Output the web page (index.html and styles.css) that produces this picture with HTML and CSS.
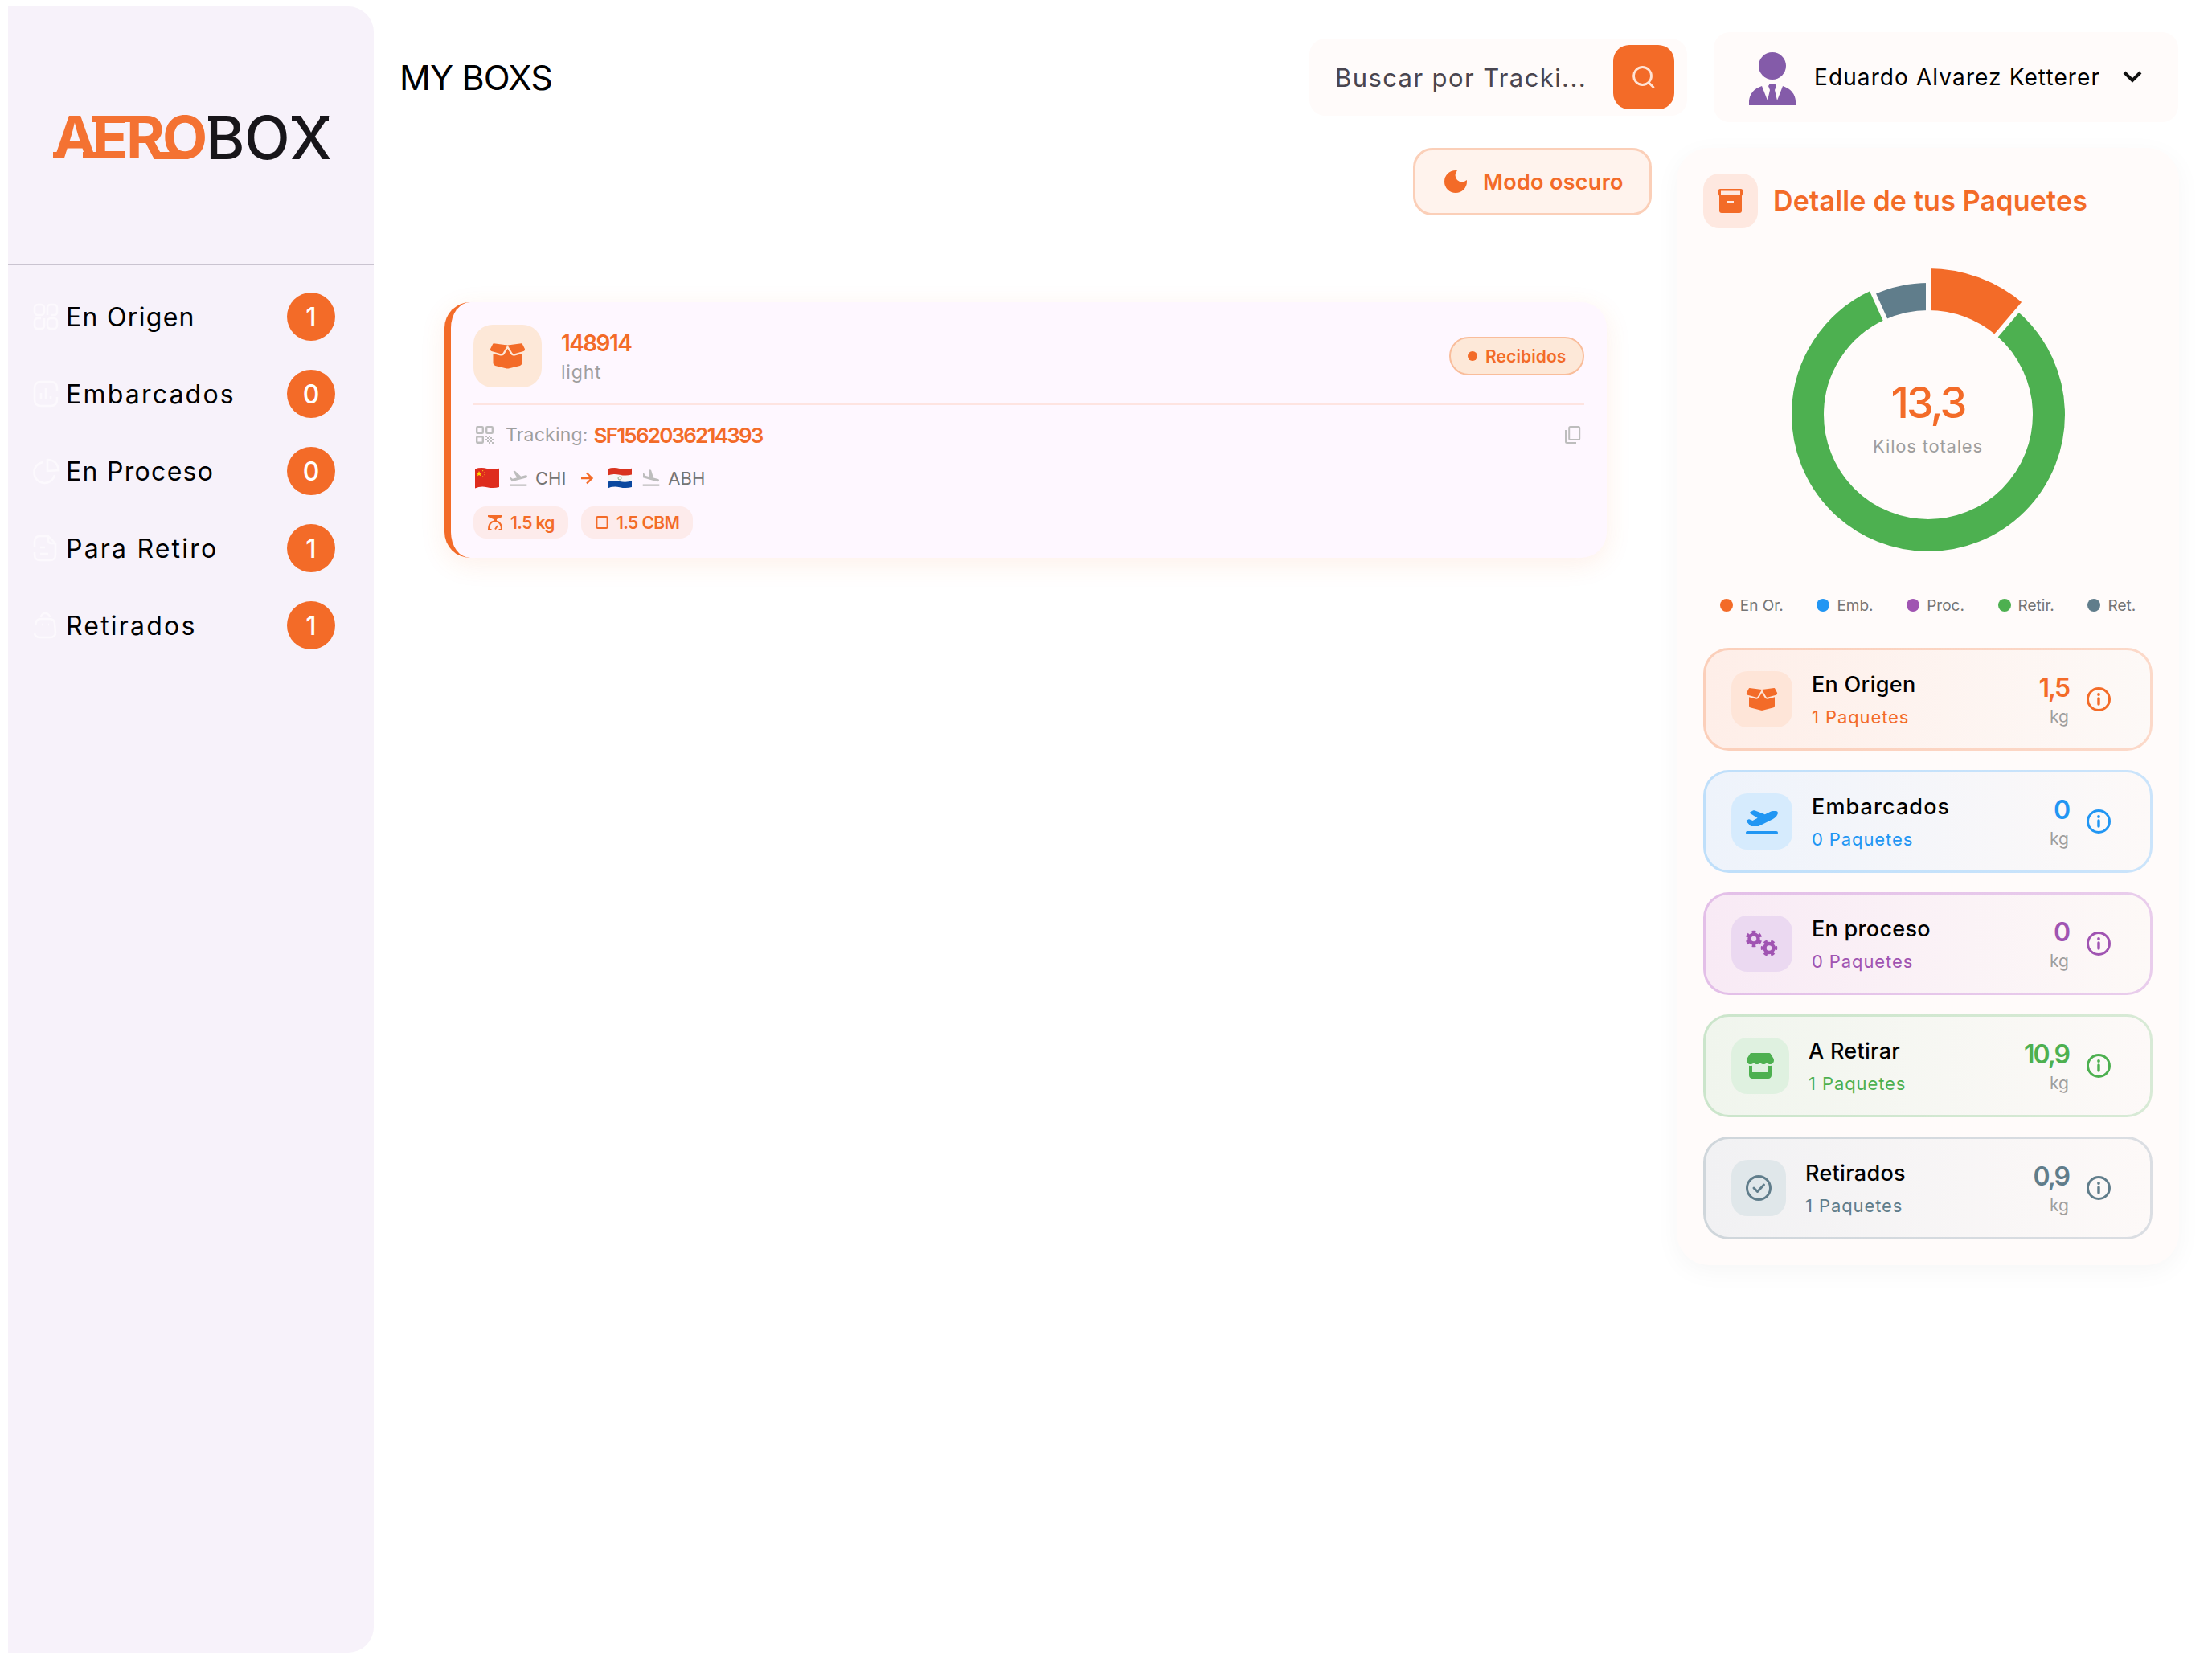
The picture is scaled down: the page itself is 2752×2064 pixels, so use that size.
FILE: index.html
```html
<!DOCTYPE html>
<html lang="es">
<head>
    <meta charset="UTF-8">
    <meta name="viewport" content="width=device-width, initial-scale=1.0">
    <title>Aerobox - My Boxs</title>
    <link rel="stylesheet" href="styles.css">
</head>
<body>

    <!-- shared icons -->
    <svg class="sprite">
        <symbol id="i-box" viewBox="0 0 640 512"><path d="M58.9 42.1c3-6.1 9.6-9.6 16.3-8.7L320 64 564.8 33.4c6.7-.8 13.3 2.7 16.3 8.7l41.7 83.4c9 17.9-.6 39.6-19.8 45.1L439.6 217.3c-13.9 4-28.8-1.9-36.2-14.3L320 64 236.6 203c-7.4 12.4-22.3 18.3-36.2 14.3L37.1 170.6c-19.3-5.5-28.8-27.2-19.8-45.1L58.9 42.1zM321.1 128l54.9 91.4c14.9 24.8 44.6 36.6 72.5 28.6L576 211.6v167c0 22-15 41.2-36.4 46.6l-204.1 51c-10.2 2.6-20.9 2.6-31 0l-204.1-51C79 419.8 64 400.6 64 378.6V211.6L191.6 248c27.8 8 57.6-3.8 72.5-28.6L318.9 128h2.2z"/></symbol>
        <symbol id="i-info" viewBox="0 0 30 30"><circle cx="15" cy="15" r="13.5" fill="none" stroke="currentColor" stroke-width="3"/><circle cx="15" cy="9" r="1.9"/><path d="M15 14v7" stroke="currentColor" stroke-width="3.4" stroke-linecap="round"/></symbol>
    </svg>

    <div class="app">
        <aside class="sidebar">
            <div class="logo">
                <svg width="346" height="64" viewBox="0 0 346 64">
                    <text class="logo-aero" x="1 50 92 137" y="61">AERO</text>
                    <text class="logo-box" x="191 239 296" y="62">BOX</text>
                    <!-- feet and joins of the letters -->
                    <path class="aero-joins" d="M1 53h10v8H1zM38 53h20v8H38zM50 8h8v8H50zM90 8h8v8H90zM126 53h34l10 9h-44z"/>
                    <path class="box-joins" d="M194 8h10v7H194zM298 8h11v7H298zM333 8h11v7H333z"/>
                </svg>
            </div>
            <nav class="menu">
                <a class="menu-item">
                    <svg class="menu-icon" viewBox="0 0 30 32"><rect x="1" y="1" width="12" height="13" rx="4"/><path d="M17 14V5q0-4 4-4h4q4 0 4 4v5q0 4-4 4h-3M9 18H5q-4 0-4 4v5q0 4 4 4h4q4 0 4-4v-9"/><rect x="17" y="18" width="12" height="13" rx="4"/></svg>
                    <span>En Origen</span><b class="count">1</b>
                </a>
                <a class="menu-item wide">
                    <svg class="menu-icon" viewBox="0 0 30 32"><path d="M29 13V9q0-8-8-8H9Q1 1 1 9v14q0 8 8 8h12q8 0 8-8v-3"/><path d="M9 15v8M15 9v14M21 19v4"/></svg>
                    <span>Embarcados</span><b class="count">0</b>
                </a>
                <a class="menu-item">
                    <svg class="menu-icon" viewBox="0 0 30 32"><path d="M12 5a13 13 0 1 0 14 16"/><path d="M17 2q12 0 14 13l-14 1z"/></svg>
                    <span>En Proceso</span><b class="count">0</b>
                </a>
                <a class="menu-item wide">
                    <svg class="menu-icon" viewBox="0 0 30 32"><path d="M1 15V8q0-7 7-7h10l9 9v14q0 7-7 7H8q-7 0-7-7v-3"/><path d="M18 1v5q0 4 4 4h5M8 15h6M8 23h10"/></svg>
                    <span>Para Retiro</span><b class="count">1</b>
                </a>
                <a class="menu-item wide">
                    <svg class="menu-icon" viewBox="0 0 30 32"><path d="M2 16l1-4q1-4 6-4h10q7 0 7 6l1 11q0 6-7 6H8q-7 0-7-6M9 6q1-5 5-5 5 0 6 5"/><path d="M10 15h1M18 15h1"/></svg>
                    <span>Retirados</span><b class="count">1</b>
                </a>
            </nav>
        </aside>

        <main class="main">
            <header class="topbar">
                <h1>MY BOXS</h1>
                <div class="search">
                    <span class="placeholder">Buscar por Tracki...</span>
                    <button class="search-btn">
                        <svg width="28" height="28" viewBox="0 0 28 28"><circle cx="12.5" cy="12.5" r="11"/><path d="M20.5 21l5.5 5.5"/></svg>
                    </button>
                </div>
                <div class="user">
                    <svg class="avatar" width="60" height="68" viewBox="0 0 60 68"><circle cx="30" cy="18" r="17"/><path d="M1 67V62Q2 48 17 43L24 61 27 48 25 43 27 40H33L35 43 33 48 36 61 43 43Q58 48 59 62V67z"/></svg>
                    <span class="user-name">Eduardo Alvarez Ketterer</span>
                    <svg class="chevron" width="24" height="16" viewBox="0 0 24 16"><path d="M2 2l10 10L22 2"/></svg>
                </div>
            </header>

            <div class="workspace">
                <section class="boxes">
                    <button class="mode-btn">
                        <svg width="28" height="28" viewBox="0 0 28 28"><path d="M14 0A14 14 0 1 0 28 14c0-.7-.1-1.3-.2-2A7.6 7.6 0 0 1 16 .2 13 13 0 0 0 14 0z"/></svg>
                        <span>Modo oscuro</span>
                    </button>

                    <article class="package">
                        <div class="package-head">
                            <div class="package-icon"><svg width="45" height="36"><use href="#i-box"/></svg></div>
                            <div class="package-name">
                                <h2>148914</h2>
                                <p>light</p>
                            </div>
                            <span class="status"><i></i><span>Recibidos</span></span>
                        </div>
                        <div class="tracking">
                            <svg class="qr" width="22" height="22" viewBox="0 0 22 22"><g fill="none" stroke="currentColor" stroke-width="2.4"><rect x="1.2" y="1.2" width="7.6" height="7.6" rx="1"/><rect x="13.2" y="1.2" width="7.6" height="7.6" rx="1"/><rect x="1.2" y="13.2" width="7.6" height="7.6" rx="1"/></g><path d="M12 12h2v2h-2zM16 12h2v2h-2zM14 14h2v2h-2zM18 14h2v2h-2zM12 16h2v2h-2zM16 16h2v2h-2zM20 16h2v2h-2zM14 18h2v2h-2zM18 18h2v2h-2zM16 20h2v2h-2zM20 20h2v2h-2z"/></svg>
                            <span class="tracking-label">Tracking:</span>
                            <span class="tracking-code">SF1562036214393</span>
                            <svg class="copy" width="20" height="22" viewBox="0 0 20 22"><rect x="5.2" y="1" width="13" height="16" rx="1.5"/><path d="M1 5v14.5q0 1.5 1.5 1.5H14"/></svg>
                        </div>
                        <div class="route">
                            <svg class="flag" width="34" height="26" viewBox="0 0 34 26"><path fill="#de2c1e" d="M2 1.5Q9-1 17 1T32 .8V24Q25 26 17 24.2T2 25.5z"/><path fill="#ffde02" d="M7 4l1 2.2 2.3.2-1.7 1.5.5 2.3L7 9l-2 1.2.5-2.3L3.800 6.400l2.300-.2z"/><path fill="#fbb21c" d="M11 3h1.200v1.200H11zM13.500 5h1.200v1.200h-1.200zM13.500 8h1.200v1.200h-1.200zM11 10.500h1.200v1.200H11z"/></svg>
                            <svg class="plane" width="26" height="26" viewBox="0 0 24 24"><path d="M2.500 19h19v2h-19zm19.570-9.360c-.21-.8-1.040-1.280-1.840-1.060L14.920 10l-6.900-6.430-1.930.51 4.140 7.170-4.970 1.330-1.970-1.540-1.450.39 1.820 3.160.77 1.330 1.600-.43 5.310-1.420 4.350-1.160L21 11.490c.81-.23 1.280-1.050 1.070-1.850z"/></svg>
                            <span class="code">CHI</span>
                            <svg class="arrow" width="16" height="16" viewBox="0 0 16 16"><path d="M1 8h13M8 1.500L14.500 8 8 14.500"/></svg>
                            <svg class="flag" width="34" height="26" viewBox="0 0 34 26"><path fill="#f6f6f6" d="M2 1.500Q9-1 17 1T32 .8V24Q25 26 17 24.200T2 25.500z"/><path fill="#d9331f" d="M2 1.500Q9-1 17 1T32 .8V8.500Q25 10.500 17 8.700T2 9.500z"/><path fill="#0b48a0" d="M2 17.500Q9 15.500 17 17T32 16.500V24Q25 26 17 24.200T2 25.500z"/><circle cx="17" cy="13" r="2" fill="none" stroke="#8fae8c"/></svg>
                            <svg class="plane" width="26" height="26" viewBox="0 0 24 24"><path d="M2.500 19h19v2h-19zm7.180-5.730 4.350 1.160 5.310 1.420c.8.210 1.620-.26 1.840-1.060.21-.8-.26-1.620-1.060-1.840l-5.310-1.420-2.760-9.020L10.120 2v8.280L5.150 8.950l-.93-2.320-1.450-.39v5.170l1.600.43 5.310 1.430z"/></svg>
                            <span class="code">ABH</span>
                        </div>
                        <div class="chips">
                            <span class="chip"><svg width="18" height="19" viewBox="0 0 18 19"><path d="M0 0h18v2L11 5v2H7V5L0 2z"/><path d="M4.500 18H1Q1 7.500 9 7.500T17 18H13.500M9 17.500l3-4.500" fill="none" stroke="currentColor" stroke-width="2"/></svg><span>1.5 kg</span></span>
                            <span class="chip"><svg width="16" height="16" viewBox="0 0 16 16"><rect x="1.500" y="1" width="13" height="14" rx="1" fill="none" stroke="currentColor" stroke-width="1.800"/></svg><span>1.5 CBM</span></span>
                        </div>
                    </article>
                </section>

                <aside class="panel">
                    <div class="panel-head">
                        <div class="panel-icon"><svg width="30" height="30" viewBox="0 0 30 30"><path fill-rule="evenodd" d="M2 0h26q2 0 2 2v4q0 2-1 2.500V27q0 3-3 3H4q-3 0-3-3V8.500Q0 8 0 6V2Q0 0 2 0zM3 2.500V7h24V2.500zM11 15v2.500h8V15z"/></svg></div>
                        <h2>Detalle de tus Paquetes</h2>
                    </div>

                    <div class="chart">
                        <svg width="400" height="400" viewBox="-200 -200 400 400">
                            <!-- kilos per state, over a total of 13.3 -->
                            <g fill="none" transform="rotate(-90)">
                                <circle r="156" pathLength="13.3" stroke="#f36b28" stroke-width="52" stroke-dasharray="1.5 11.8"/>
                                <circle r="150" pathLength="13.3" stroke="#4db050" stroke-width="40" stroke-dasharray="10.9 2.4" stroke-dashoffset="-1.5"/>
                                <circle r="147" pathLength="13.3" stroke="#607d8b" stroke-width="34" stroke-dasharray="0.9 12.4" stroke-dashoffset="-12.4"/>
                            </g>
                            <g stroke="#fffbfa" stroke-width="6">
                                <path d="M0-120V-190"/>
                                <path d="M0-120V-190" transform="rotate(40.6)"/>
                                <path d="M0-120V-190" transform="rotate(-24.36)"/>
                            </g>
                        </svg>
                        <div class="chart-total">
                            <strong>13,3</strong>
                            <span>Kilos totales</span>
                        </div>
                    </div>

                    <ul class="legend">
                        <li class="origen"><i></i><span>En Or.</span></li>
                        <li class="embarcados"><i></i><span>Emb.</span></li>
                        <li class="proceso"><i></i><span>Proc.</span></li>
                        <li class="retirar"><i></i><span>Retir.</span></li>
                        <li class="retirados"><i></i><span>Ret.</span></li>
                    </ul>

                    <div class="states">
                        <div class="state origen">
                            <div class="state-icon"><svg width="40" height="32"><use href="#i-box"/></svg></div>
                            <div class="state-text"><h3>En Origen</h3><p>1 Paquetes</p></div>
                            <div class="state-kg"><strong>1,5</strong><span>kg</span></div>
                            <svg class="info" width="30" height="30"><use href="#i-info"/></svg>
                        </div>
                        <div class="state embarcados">
                            <div class="state-icon"><svg width="40" height="32" viewBox="0 0 640 512"><path d="M381 114.900L186.100 41.800c-16.700-6.200-35.200-5.300-51.100 2.700L89.100 67.400C78 73 77.200 88.500 87.600 95.200l146.900 94.500L136 240 77.800 214.100c-8.700-3.900-18.800-3.700-27.300 .6L18.300 230.800c-9.300 4.700-11.800 16.800-5 24.700l73.100 85.300c6.100 7.100 15 11.200 24.300 11.200H248.400c5 0 9.900-1.200 14.300-3.400L535.600 212.200c46.500-23.300 82.500-63.300 100.800-112C645.900 75 627.200 48 600.200 48H542.800c-20.200 0-40.200 4.800-58.200 14L381 114.900zM0 480c0 17.700 14.300 32 32 32H608c17.700 0 32-14.300 32-32s-14.300-32-32-32H32c-17.700 0-32 14.300-32 32z"/></svg></div>
                            <div class="state-text"><h3>Embarcados</h3><p>0 Paquetes</p></div>
                            <div class="state-kg"><strong>0</strong><span>kg</span></div>
                            <svg class="info" width="30" height="30"><use href="#i-info"/></svg>
                        </div>
                        <div class="state proceso">
                            <div class="state-icon"><svg width="40" height="32" viewBox="0 0 40 32"><g fill="none" stroke="currentColor"><circle cx="10" cy="10" r="5.500" stroke-width="4.500"/><circle cx="10" cy="10" r="8.500" stroke-width="3.500" pathLength="12" stroke-dasharray="1 1" stroke-dashoffset=".5" transform="rotate(-90 10 10)"/><circle cx="29" cy="21.500" r="5.500" stroke-width="4.500"/><circle cx="29" cy="21.500" r="8.500" stroke-width="3.500" pathLength="12" stroke-dasharray="1 1" stroke-dashoffset=".5"/></g></svg></div>
                            <div class="state-text"><h3>En proceso</h3><p>0 Paquetes</p></div>
                            <div class="state-kg"><strong>0</strong><span>kg</span></div>
                            <svg class="info" width="30" height="30"><use href="#i-info"/></svg>
                        </div>
                        <div class="state retirar">
                            <div class="state-icon"><svg width="36" height="32" viewBox="0 0 576 512"><path d="M547.600 103.800L490.300 13.100C485.200 5 476.100 0 466.400 0H109.600C99.900 0 90.800 5 85.700 13.100L28.300 103.800c-29.600 46.800-3.400 111.900 51.900 119.400c4 .5 8.100 .8 12.100 .8c26.100 0 49.300-11.400 65.200-29c15.900 17.600 39.100 29 65.200 29c26.100 0 49.300-11.400 65.200-29c15.900 17.600 39.100 29 65.200 29c26.200 0 49.300-11.400 65.200-29c16 17.600 39.100 29 65.200 29c4.100 0 8.100-.3 12.100-.8c55.500-7.400 81.800-72.500 52.100-119.400zM499.700 254.900l-.1 0c-5.300 .7-10.700 1.100-16.200 1.100c-12.400 0-24.300-1.900-35.400-5.300V384H128V250.600c-11.200 3.500-23.200 5.400-35.600 5.400c-5.500 0-11-.4-16.300-1.100l-.1 0c-4.100-.6-8.100-1.300-12-2.300V384v64c0 35.300 28.700 64 64 64H448c35.300 0 64-28.700 64-64V384 252.600c-4 1-8 1.800-12.300 2.300z"/></svg></div>
                            <div class="state-text"><h3>A Retirar</h3><p>1 Paquetes</p></div>
                            <div class="state-kg"><strong>10,9</strong><span>kg</span></div>
                            <svg class="info" width="30" height="30"><use href="#i-info"/></svg>
                        </div>
                        <div class="state retirados">
                            <div class="state-icon"><svg width="32" height="32" viewBox="0 0 32 32"><g fill="none" stroke="currentColor" stroke-width="3"><circle cx="16" cy="16" r="14.500"/><path d="M10 16l4.500 4.500 8-8.500" stroke-linecap="round" stroke-linejoin="round"/></g></svg></div>
                            <div class="state-text"><h3>Retirados</h3><p>1 Paquetes</p></div>
                            <div class="state-kg"><strong>0,9</strong><span>kg</span></div>
                            <svg class="info" width="30" height="30"><use href="#i-info"/></svg>
                        </div>
                    </div>
                </aside>
            </div>
        </main>
    </div>

</body>
</html>
```
FILE: styles.css
```css
* { box-sizing: border-box; }
body { margin: 0; background: #fff; color: #000; font-family: Inter, "Open Sans", sans-serif; }
h1, h2, h3, p, ul { margin: 0; padding: 0; font-weight: 400; }
button { font: inherit; border: none; cursor: pointer; }
svg { display: block; flex: none; fill: currentColor; overflow: visible; }
.sprite { display: none; }

.origen { --color: #f36b28; --tile: #fee5d8; --from: #feeee8; --to: #fdf9f7; --line: #fbcfba; --line-end: #fcd9c9; }
.embarcados { --color: #2196f3; --tile: #d6ebfd; --from: #eef3fb; --to: #fdf9f8; --line: #bfdffa; --line-end: #cbe4fb; }
.proceso { --color: #a054b2; --tile: #ebd9f1; --from: #f8eaf5; --to: #fdf9f7; --line: #e3bfe8; --line-end: #e9cdec; }
.retirar { --color: #4db050; --tile: #dff1e0; --from: #f0f5ed; --to: #fdf9f8; --line: #cbe5cb; --line-end: #d8ead6; }
.retirados { --color: #607d8b; --tile: #e0e7ea; --from: #f1f1f3; --to: #fdf9f8; --line: #cfd6db; --line-end: #dbdee3; }

.app { display: flex; height: 2064px; padding: 8px 41px 8px 10px; }

/* sidebar */
.sidebar { width: 455px; flex: none; background: #f7f2fa; border-radius: 0 32px 32px 0; }
.logo { display: flex; justify-content: center; align-items: center; height: 322px; border-bottom: 2px solid #cac4d0; }
.logo-aero { font: 700 73px Inter, sans-serif; }
.logo-box { font: 500 74px Inter, sans-serif; }
.logo-aero, .aero-joins { fill: #f47232; }
.logo-box, .box-joins { fill: #18161a; }
.menu { padding-top: 16px; }
.menu-item { display: flex; align-items: center; height: 96px; padding: 0 48px 0 32px; font-size: 32px; letter-spacing: 1.3px; }
.menu-item.wide { letter-spacing: 2.2px; }
.menu-icon { width: 30px; height: 32px; margin-right: 10px; fill: none; stroke: #fcf9fd; stroke-width: 2.5; }
.menu-item .count { display: flex; align-items: center; justify-content: center; width: 60px; height: 60px; margin-left: auto; border-radius: 50%; background: #f36b28; color: #fff; font-weight: 500; letter-spacing: 0; }

/* top bar */
.main { flex: 1; padding: 32px 0 0 32px; }
.topbar { display: flex; align-items: center; height: 112px; margin-right: 1px; }
h1 { margin-right: auto; font-size: 43px; letter-spacing: -.9px; }
.search { display: flex; align-items: center; justify-content: space-between; width: 470px; height: 96px; padding: 0 16px 0 32px; border-radius: 20px; background: #fffbfa; }
.placeholder { color: #49454f; font-size: 31px; letter-spacing: 1.4px; white-space: nowrap; }
.search-btn { display: flex; align-items: center; justify-content: center; width: 76px; height: 80px; border-radius: 20px; background: #f36b28; }
.search-btn svg { fill: none; stroke: #ffe3d5; stroke-width: 2.8; stroke-linecap: round; }
.user { display: flex; align-items: center; width: 578px; height: 112px; margin-left: 33px; padding: 0 45px 0 43px; border-radius: 20px; background: #fffbfa; }
.avatar { margin-top: 4px; color: #845ba9; }
.user-name { margin-left: 22px; font-size: 28px; letter-spacing: 1.1px; white-space: nowrap; }
.chevron { margin-left: auto; fill: none; stroke: #111; stroke-width: 4; }

/* package list */
.workspace { display: flex; align-items: flex-start; justify-content: space-between; margin-top: 32px; }
.boxes { display: flex; flex-direction: column; width: 1558px; }
.mode-btn { display: flex; align-items: center; align-self: flex-end; width: 297px; height: 84px; padding: 0 0 0 36px; border: 3px solid #fbcfb8; border-radius: 24px; background: #fff3ed; color: #f36b28; font-size: 27px; font-weight: 600; letter-spacing: .3px; }
.mode-btn span { margin-left: 20px; }
.package { margin: 108px 56px 0; padding: 28px 28px 24px; border-left: 8px solid #f36b28; border-radius: 32px; background: #fef7ff; box-shadow: 0 8px 32px rgba(243, 107, 40, .1); }
.package-head { display: flex; align-items: center; height: 100px; padding-bottom: 20px; border-bottom: 2px solid #fee4e1; }
.package-icon { display: flex; align-items: center; justify-content: center; width: 85px; height: 78px; border-radius: 24px; background: #fde8d8; color: #f36b28; }
.package-name { margin: 3px 0 0 24px; line-height: 36px; }
.package-name h2 { color: #f36b28; font-size: 28px; font-weight: 600; letter-spacing: -1.6px; }
.package-name p { color: #9e9e9e; font-size: 23px; letter-spacing: .8px; }
.status { display: flex; align-items: center; width: 168px; height: 48px; margin-left: auto; padding-left: 21px; border: 2px solid #f9bd9b; border-radius: 24px; background: #fde8d8; color: #f36b28; font-size: 21px; font-weight: 600; letter-spacing: .1px; }
.status i { width: 12px; height: 12px; margin-right: 10px; border-radius: 50%; background: #f36b28; }
.tracking { display: flex; align-items: center; height: 36px; margin-top: 19px; font-size: 23px; }
.qr, .plane, .copy { color: #bdbdbd; }
.qr { margin-left: 3px; }
.tracking-label { margin-left: 15px; color: #9e9e9e; letter-spacing: .2px; }
.tracking-code { margin-left: 7px; color: #f36b28; font-size: 26px; font-weight: 600; letter-spacing: -1.8px; }
.copy { margin: 0 4px 0 auto; fill: none; stroke: currentColor; stroke-width: 2; }
.route { display: flex; align-items: center; height: 40px; margin-top: 16px; color: #757575; font-size: 22px; }
.plane { margin: 0 8px 0 9px; }
.arrow { margin: 0 16px 0 18px; fill: none; stroke: #f36b28; stroke-width: 2.4; }
.chips { display: flex; gap: 16px; margin-top: 15px; }
.chip { display: flex; align-items: center; height: 40px; padding: 0 17px 0 18px; border-radius: 16px; background: #fdebeb; color: #f36b28; font-size: 21px; font-weight: 600; letter-spacing: -.6px; }
.chip span { margin-left: 10px; }

/* detail panel */
.panel { width: 625px; padding: 32px 33px; border-radius: 40px; background: #fffbfa; box-shadow: 0 8px 32px rgba(0, 0, 0, .04); }
.panel-head { display: flex; align-items: center; height: 68px; }
.panel-icon { display: flex; align-items: center; justify-content: center; width: 68px; height: 68px; border-radius: 20px; background: #fee8e0; color: #f36b28; }
.panel-head h2 { margin: -2px 0 0 19px; color: #f36b28; font-size: 34px; font-weight: 600; letter-spacing: .2px; white-space: nowrap; }
.chart { display: flex; justify-content: center; position: relative; margin-top: 32px; }
.chart-total { position: absolute; top: 153px; left: 0; right: 0; text-align: center; }
.chart-total strong { display: block; color: #f36b28; font-size: 54px; font-weight: 500; line-height: 64px; letter-spacing: -3px; }
.chart-total span { display: block; color: #9e9e9e; font-size: 22px; line-height: 44px; letter-spacing: .8px; }
.legend { display: flex; justify-content: space-around; height: 24px; margin-top: 25px; list-style: none; color: #757575; font-size: 19px; }
.legend li { display: flex; align-items: center; }
.legend i { width: 16px; height: 16px; margin-right: 9px; border-radius: 50%; background: var(--color); }
.states { display: flex; flex-direction: column; gap: 24px; margin-top: 41px; }
.state { display: flex; align-items: center; height: 128px; padding: 0 49px 0 32px; border: 3px solid transparent; border-radius: 32px; background: linear-gradient(90deg, var(--from), var(--to)) padding-box, linear-gradient(90deg, var(--line), var(--line-end)) border-box; color: var(--color); }
.state-icon { padding: 19px 18px; border-radius: 20px; background: var(--tile); }
.state-text { margin: 3px 0 0 24px; line-height: 40px; }
.state-text h3 { color: #000; font-size: 27px; font-weight: 500; letter-spacing: .3px; }
.embarcados h3 { letter-spacing: 1.1px; }
.state-text p { font-size: 22px; letter-spacing: .9px; }
.state-kg { margin: 6px 22px 0 auto; text-align: right; }
.state-kg strong { display: block; font-size: 32px; font-weight: 600; line-height: 38px; letter-spacing: -2px; }
.state-kg span { display: block; color: #9e9e9e; font-size: 21px; line-height: 34px; }
```
